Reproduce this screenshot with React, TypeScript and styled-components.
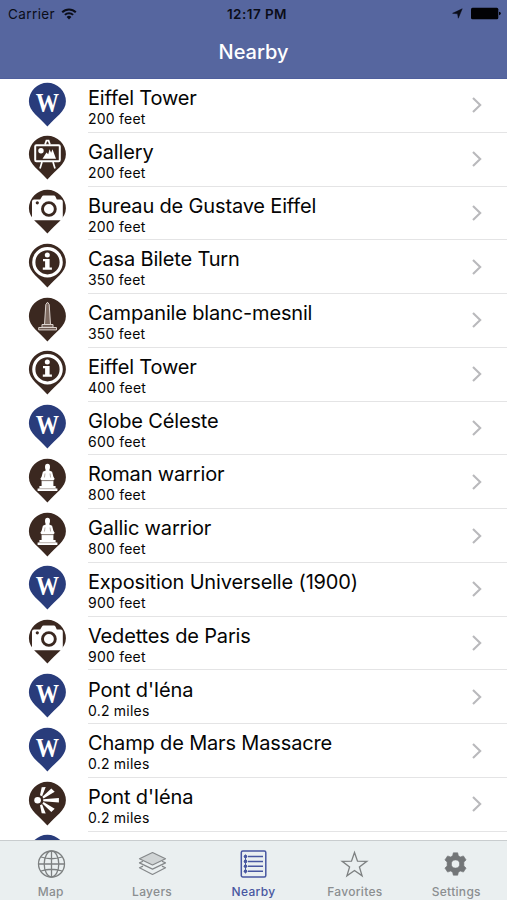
import React from 'react';
import styled, { createGlobalStyle } from 'styled-components';

const Global = createGlobalStyle`
  * { box-sizing: border-box; }
  body { margin: 0; background: #fff; overflow: hidden; }
`;

const Screen = styled.div`
  width: 507px;
  height: 900px;
  display: flex;
  flex-direction: column;
  overflow: hidden;
  background: #fff;
  color: #050505;
  font-family: Inter, 'Liberation Sans', sans-serif;
`;

const Header = styled.header`
  flex: none;
  height: 79px;
  background: #56669f;
  border-bottom: 1px solid #4f5f9d;
`;

const StatusBar = styled.div`
  height: 27px;
  padding: 0 6px 0 8px;
  display: grid;
  grid-template-columns: 1fr auto 1fr;
  align-items: center;
  color: #0b0d18;
  font-size: 13.5px;
`;

const StatusSide = styled.div<{ $end?: boolean }>`
  display: flex;
  align-items: center;
  gap: ${(p) => (p.$end ? 8 : 6)}px;
  justify-content: ${(p) => (p.$end ? 'flex-end' : 'flex-start')};
`;

const Carrier = styled.span`
  letter-spacing: 0.4px;
`;

const Clock = styled.time`
  padding-left: 4px;
  margin-right: -1px;
  font-weight: 600;
  font-size: 13.5px;
  letter-spacing: 0.45px;
`;

const Title = styled.h1`
  margin: 0;
  height: 51px;
  line-height: 51px;
  text-align: center;
  color: #fff;
  font-size: 20px;
  font-weight: 550;
  letter-spacing: 0;
`;

const List = styled.ul`
  flex: 1;
  min-height: 0;
  margin: 0;
  padding: 0;
  overflow: hidden;
  list-style: none;
`;

const Row = styled.li`
  height: 53.77px;
  display: flex;
  padding-left: 28px;
`;

const PinSlot = styled.div`
  flex: none;
  width: 60px;
  padding-top: 2.6px;
`;

const RowBody = styled.div`
  flex: 1;
  display: flex;
  align-items: center;
  justify-content: space-between;
  padding-right: 24px;
  border-bottom: 1px solid #e4e4e5;
`;

const Labels = styled.div`
  display: flex;
  flex-direction: column;
  padding-top: 2.4px;
`;

const Name = styled.span`
  font-size: 20px;
  line-height: 24px;
  letter-spacing: -0.16px;
  white-space: nowrap;
`;

const Distance = styled.span`
  font-size: 14px;
  line-height: 17px;
  letter-spacing: 0.22px;
`;

const TabBar = styled.nav`
  flex: none;
  height: 60px;
  display: grid;
  grid-template-columns: repeat(5, 1fr);
  background: #eaeff0;
  border-top: 1px solid #c9cdcf;
`;

const Tab = styled.div<{ $active?: boolean }>`
  display: flex;
  flex-direction: column;
  align-items: center;
  padding-top: 8px;
  gap: 5px;
  color: ${(p) => (p.$active ? '#4857a0' : '#8b8e90')};
  font-size: 12px;
  line-height: 15px;
  font-weight: ${(p) => (p.$active ? 500 : 450)};
  letter-spacing: 0.3px;
`;

const PinLetter = styled.text`
  font-family: 'Liberation Serif', serif;
  font-weight: 700;
  font-size: 25px;
  text-anchor: middle;
  fill: #fff;
`;

type Kind = 'wiki' | 'gallery' | 'camera' | 'info' | 'obelisk' | 'statue' | 'view';

function Glyph({ kind }: { kind: Kind }) {
  switch (kind) {
    case 'wiki':
      return (
        <PinLetter transform="translate(19.4 30) scale(.93 1.06)">W</PinLetter>
      );
    case 'gallery':
      return (
        <g fill="none" stroke="#fff" strokeWidth="2">
          <rect x="7.2" y="10.2" width="24.6" height="16" rx="1.2" />
          <path d="M17 9.6l1.4-4h2.200l1.400 4M14 27l-2 6.500M25 27l2 6.500" strokeWidth="1.700" />
          <circle cx="13" cy="15.800" r="2.700" fill="#fff" stroke="none" />
          <path d="M14.500 23.800l4-6.300 1.700 1.800 1.400-5 1.500 3.500 1.400-3.500 3.500 9.500z" fill="#fff" stroke="none" />
        </g>
      );
    case 'camera':
      return (
        <g>
          <path
            d="M4 12.400q.2-1.800 2-1.800h6.200l1.800-3.200q.5-1 1.500-1h10.400q1 0 1.500 1l1.400 3.200h4q1.800 0 2 1.800v16.800q0 2-2.200 2H6.200q-2.200 0-2.200-2.200z"
            fill="#fff"
          />
          <circle cx="20.900" cy="20" r="6.400" fill="none" stroke="#3b2820" strokeWidth="2.900" />
          <circle cx="9.300" cy="13.800" r="1.600" fill="#3b2820" />
        </g>
      );
    case 'info':
      return (
        <g fill="#fff">
          <circle cx="19.500" cy="19.300" r="13.700" fill="none" stroke="#fff" strokeWidth="3.200" />
          <circle cx="19.300" cy="12" r="2.500" />
          <path d="M15 16h6.600v8.600h2.300v2.200h-9.100v-2.200h2.300v-6.400H15z" />
        </g>
      );
    case 'obelisk':
      return (
        <g fill="none" stroke="#dcd3ce" strokeWidth="1">
          <path d="M16.500 27.500l1.300-20 1.700-2.300 1.700 2.300 1.300 20z" fill="#806c62" />
          <path d="M14 27.500h11v2.800H14zM10.700 30.500h17.800v2.400H10.700z" fill="#6f5b52" />
        </g>
      );
    case 'statue':
      return (
        <g fill="#fff">
          <ellipse cx="19.500" cy="9" rx="2.500" ry="3.300" />
          <path d="M17.700 11h3.600v1.500l2.800 1.300 1.300 4.900 1.300 2.300-1.500 1.400H13.800L12.300 21l1.300-2.300 1.300-4.900 2.800-1.300z" />
          <path d="M13.600 23h11.800v4.900h2.200v2.700h1.800v2.500H9.600v-2.500h1.800v-2.700h2.200z" />
          <path d="M17 15.500l-.6 4M22 15.500l.6 4M13.500 22.700h12M11.400 30.700h16" stroke="#8a7a72" strokeWidth=".6" />
        </g>
      );
    case 'view':
      return (
        <g fill="#fff">
          <circle cx="9.600" cy="19.200" r="3.300" />
          <path d="M12 14.300l1.700-8.100 4-.2-3.600 9.300zM14.400 15.800l8.900-8.300 3.400 3.200-11.200 6.800zM15.200 18.200l15.700-1.300v4.600l-15.700-1.300zM15.500 21l11.200 6.700-3.400 3.200-8.900-8.300zM14.100 23.200l3.600 9.200-4-.2L12 24.200z" />
        </g>
      );
  }
}

function Pin({ kind, plain }: { kind: Kind; plain?: boolean }) {
  return (
    <svg width="39" height="46" viewBox="0 0 39 46" display="block">
      <path
        d="M19.400.800A18.500 18.500 0 0 0 .900 19.200C.900 29.500 11.400 35 19.400 44.500C27.400 35 37.900 29.500 37.900 19.200A18.500 18.500 0 0 0 19.400.800z"
        fill={kind === 'wiki' ? '#293c7b' : '#3b2820'}
      />
      {!plain && <Glyph kind={kind} />}
    </svg>
  );
}

const places: { name: string; distance: string; kind: Kind }[] = [
  { name: 'Eiffel Tower', distance: '200 feet', kind: 'wiki' },
  { name: 'Gallery', distance: '200 feet', kind: 'gallery' },
  { name: 'Bureau de Gustave Eiffel', distance: '200 feet', kind: 'camera' },
  { name: 'Casa Bilete Turn', distance: '350 feet', kind: 'info' },
  { name: 'Campanile blanc-mesnil', distance: '350 feet', kind: 'obelisk' },
  { name: 'Eiffel Tower', distance: '400 feet', kind: 'info' },
  { name: 'Globe Céleste', distance: '600 feet', kind: 'wiki' },
  { name: 'Roman warrior', distance: '800 feet', kind: 'statue' },
  { name: 'Gallic warrior', distance: '800 feet', kind: 'statue' },
  { name: 'Exposition Universelle (1900)', distance: '900 feet', kind: 'wiki' },
  { name: 'Vedettes de Paris', distance: '900 feet', kind: 'camera' },
  { name: "Pont d'Iéna", distance: '0.2 miles', kind: 'wiki' },
  { name: 'Champ de Mars Massacre', distance: '0.2 miles', kind: 'wiki' },
  { name: "Pont d'Iéna", distance: '0.2 miles', kind: 'view' },
];

const Chevron = () => (
  <svg width="12" height="18" viewBox="0 0 12 18" fill="none" stroke="#b9b9bc" strokeWidth="2.1">
    <path d="M2 2l7.2 7L2 16" />
  </svg>
);

const GlobeIcon = () => (
  <svg width="30" height="30" viewBox="0 0 30 30" fill="none" stroke="#7d8081" strokeWidth="1.3">
    <circle cx="15.500" cy="15" r="13" />
    <ellipse cx="15.500" cy="15" rx="7.3" ry="13" />
    <path d="M15.500 2v26M2.500 15h26M5 8q10.500 3.500 21 0M5 22q10.500-3.500 21 0" />
  </svg>
);

const LayersIcon = () => (
  <svg width="30" height="30" viewBox="0 0 30 30" fill="none" stroke="#85888a" strokeWidth="1.2" strokeLinejoin="round">
    <path d="M15.500 3.500l13 6.200-13 6.300-13-6.300z" fill="#d0d4d5" />
    <path d="M6 12.300l-3.500 1.600 13 6.200 13-6.200-3.500-1.600M6 17.100l-3.500 1.700 13 6.700 13-6.700-3.500-1.700" />
  </svg>
);

const ListIcon = () => (
  <svg width="30" height="30" viewBox="0 0 30 30" fill="none" stroke="#4857a0" strokeWidth="1.5">
    <rect x="3.300" y="1.900" width="24.500" height="26" rx="1.500" />
    <path d="M10 7.500h15M10 12.400h15M10 17.300h15M10 22.200h15" />
    <path d="M7.500 5.500v19" strokeWidth="1" />
    <g fill="#4857a0" stroke="none">
      <circle cx="7.500" cy="7.500" r="1.800" />
      <circle cx="7.500" cy="12.400" r="1.800" />
      <circle cx="7.500" cy="17.300" r="1.800" />
      <circle cx="7.500" cy="22.200" r="1.800" />
    </g>
  </svg>
);

const StarIcon = () => (
  <svg width="30" height="30" viewBox="0 0 30 30" fill="none" stroke="#7d8081" strokeWidth="1.300">
    <path d="M14.500 3.500l3 8.700 9.300.1-7.400 5.600 2.700 8.900-7.600-5.300-7.600 5.300 2.700-8.900-7.400-5.600 9.300-.1z" />
  </svg>
);

const GearIcon = () => (
  <svg width="30" height="30" viewBox="0 0 30 30" fill="#737678" stroke="#737678" strokeWidth=".6" strokeLinejoin="round">
    <path
      fillRule="evenodd"
      d="M12.300 3.800h4.400l.7 3 2 1.100 3-1 2.700 4-2.200 2.200v3.800l2.200 2.200-2.700 4-3-1-2 1.100-.7 3h-4.400l-.7-3-2-1.100-3 1-2.700-4 2.200-2.200v-3.800l-2.200-2.200 2.700-4 3 1 2-1.100zM14.500 10.900a4.100 4.100 0 1 0 0 8.200 4.100 4.100 0 0 0 0-8.200z"
    />
  </svg>
);

const WifiIcon = () => (
  <svg width="16" height="12" viewBox="0 0 16 12" fill="none" stroke="#0b0d18" strokeWidth="2">
    <path d="M1.200 4.200a9.600 9.600 0 0 1 13.600 0M3.900 6.900a5.800 5.800 0 0 1 8.200 0" />
    <path d="M8 11.400L5.600 8.900a3.400 3.400 0 0 1 4.800 0z" fill="#0b0d18" stroke="none" />
  </svg>
);

const LocationIcon = () => (
  <svg width="11" height="11" viewBox="0 0 11 11" fill="#0b0d18" stroke="#0b0d18" strokeWidth=".5">
    <path d="M10.200.800L6.300 10.200 5.600 5.800.6 5.300z" />
  </svg>
);

const BatteryIcon = () => (
  <svg width="30" height="13" viewBox="0 0 30 13" fill="#020205">
    <rect x="0" y=".8" width="27.300" height="11.400" rx="1.500" />
    <path d="M28 4.800q1.800.3 1.800 1.700T28 8.200z" />
  </svg>
);

const tabs = [
  { label: 'Map', Icon: GlobeIcon },
  { label: 'Layers', Icon: LayersIcon },
  { label: 'Nearby', Icon: ListIcon, active: true },
  { label: 'Favorites', Icon: StarIcon },
  { label: 'Settings', Icon: GearIcon },
];

export default function App() {
  return (
    <Screen>
      <Global />
      <Header>
        <StatusBar>
          <StatusSide>
            <Carrier>Carrier</Carrier>
            <WifiIcon />
          </StatusSide>
          <Clock>12:17 PM</Clock>
          <StatusSide $end>
            <LocationIcon />
            <BatteryIcon />
          </StatusSide>
        </StatusBar>
        <Title>Nearby</Title>
      </Header>
      <List>
        {places.map((place, i) => (
          <Row key={i}>
            <PinSlot>
              <Pin kind={place.kind} />
            </PinSlot>
            <RowBody>
              <Labels>
                <Name>{place.name}</Name>
                <Distance>{place.distance}</Distance>
              </Labels>
              <Chevron />
            </RowBody>
          </Row>
        ))}
        <Row>
          <PinSlot>
            <Pin kind="wiki" plain />
          </PinSlot>
        </Row>
      </List>
      <TabBar>
        {tabs.map(({ label, Icon, active }) => (
          <Tab key={label} $active={active}>
            <Icon />
            {label}
          </Tab>
        ))}
      </TabBar>
    </Screen>
  );
}
